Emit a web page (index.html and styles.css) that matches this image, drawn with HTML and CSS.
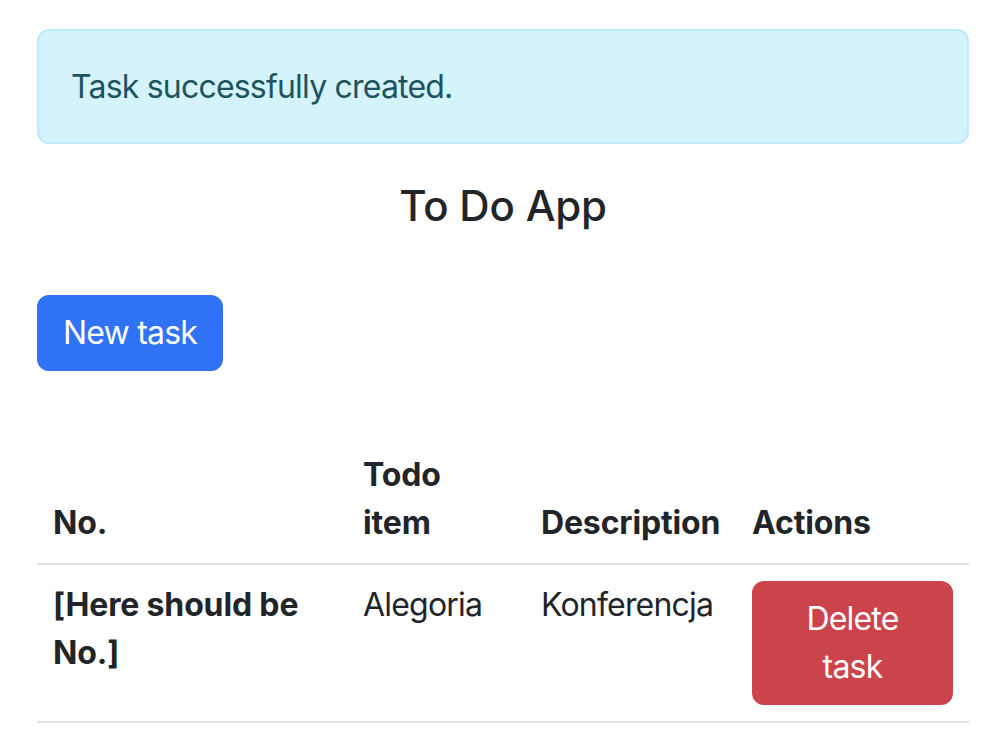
FILE: index.html
```html
<!DOCTYPE html>
<html lang="en">
<head>
<meta charset="utf-8">
<title>To Do App</title>
<link rel="stylesheet" href="styles.css">
</head>
<body>
<div class="container">
  <div class="alert">Task successfully created.</div>
  <h1 class="title">To Do App</h1>
  <div class="toolbar">
    <button class="btn btn-primary" type="button">New task</button>
  </div>
  <table class="table">
    <thead>
      <tr>
        <th class="col-no">No.</th>
        <th class="col-item">Todo item</th>
        <th class="col-desc">Description</th>
        <th class="col-actions">Actions</th>
      </tr>
    </thead>
    <tbody>
      <tr>
        <th>[Here should be No.]</th>
        <td>Alegoria</td>
        <td>Konferencja</td>
        <td><button class="btn btn-danger" type="button">Delete task</button></td>
      </tr>
    </tbody>
  </table>
</div>
</body>
</html>
```
FILE: styles.css
```css
* { box-sizing: border-box; }
html, body { margin: 0; padding: 0; background: #fff; }
body {
  font-family: Inter, "Noto Sans", "Liberation Sans", sans-serif;
  font-size: 32px;
  line-height: 48px;
  color: #212529;
  letter-spacing: -0.8px;
}
.container {
  padding: 29px 17px 0 37px;
}
.alert {
  background: #d5f3fb;
  border: 2px solid #bdebf7;
  color: #1d5462;
  border-radius: 12px;
  padding: 32px 32px 31px;
  margin-bottom: 32px;
}
.title {
  margin: 0;
  text-align: center;
  font-size: 42px;
  font-weight: 500;
  line-height: 56px;
  letter-spacing: -0.2px;
  padding-top: 2px;
  height: 119px;
}
.toolbar {
  height: 140px;
}
.btn {
  font-family: inherit;
  font-size: 32px;
  line-height: 48px;
  letter-spacing: -0.8px;
  color: #fff;
  border: 2px solid transparent;
  border-radius: 12px;
  padding: 12px 24px;
  cursor: pointer;
}
.btn-primary {
  background: #2f72f5;
  border-color: #2f72f5;
}
.btn-danger {
  background: #cc444b;
  border-color: #cc444b;
  width: 201px;
}
.table {
  width: 100%;
  border-collapse: collapse;
  table-layout: fixed;
}
.table th, .table td {
  padding: 16px;
  text-align: left;
  vertical-align: top;
  border-bottom: 2px solid #dee2e6;
}
.table thead th {
  vertical-align: bottom;
}
.table th { font-weight: 700; letter-spacing: -0.15px; }
.col-no { width: 310px; }
.col-item { width: 178px; }
.col-desc { width: 211px; }
.col-actions { width: 233px; }
```
